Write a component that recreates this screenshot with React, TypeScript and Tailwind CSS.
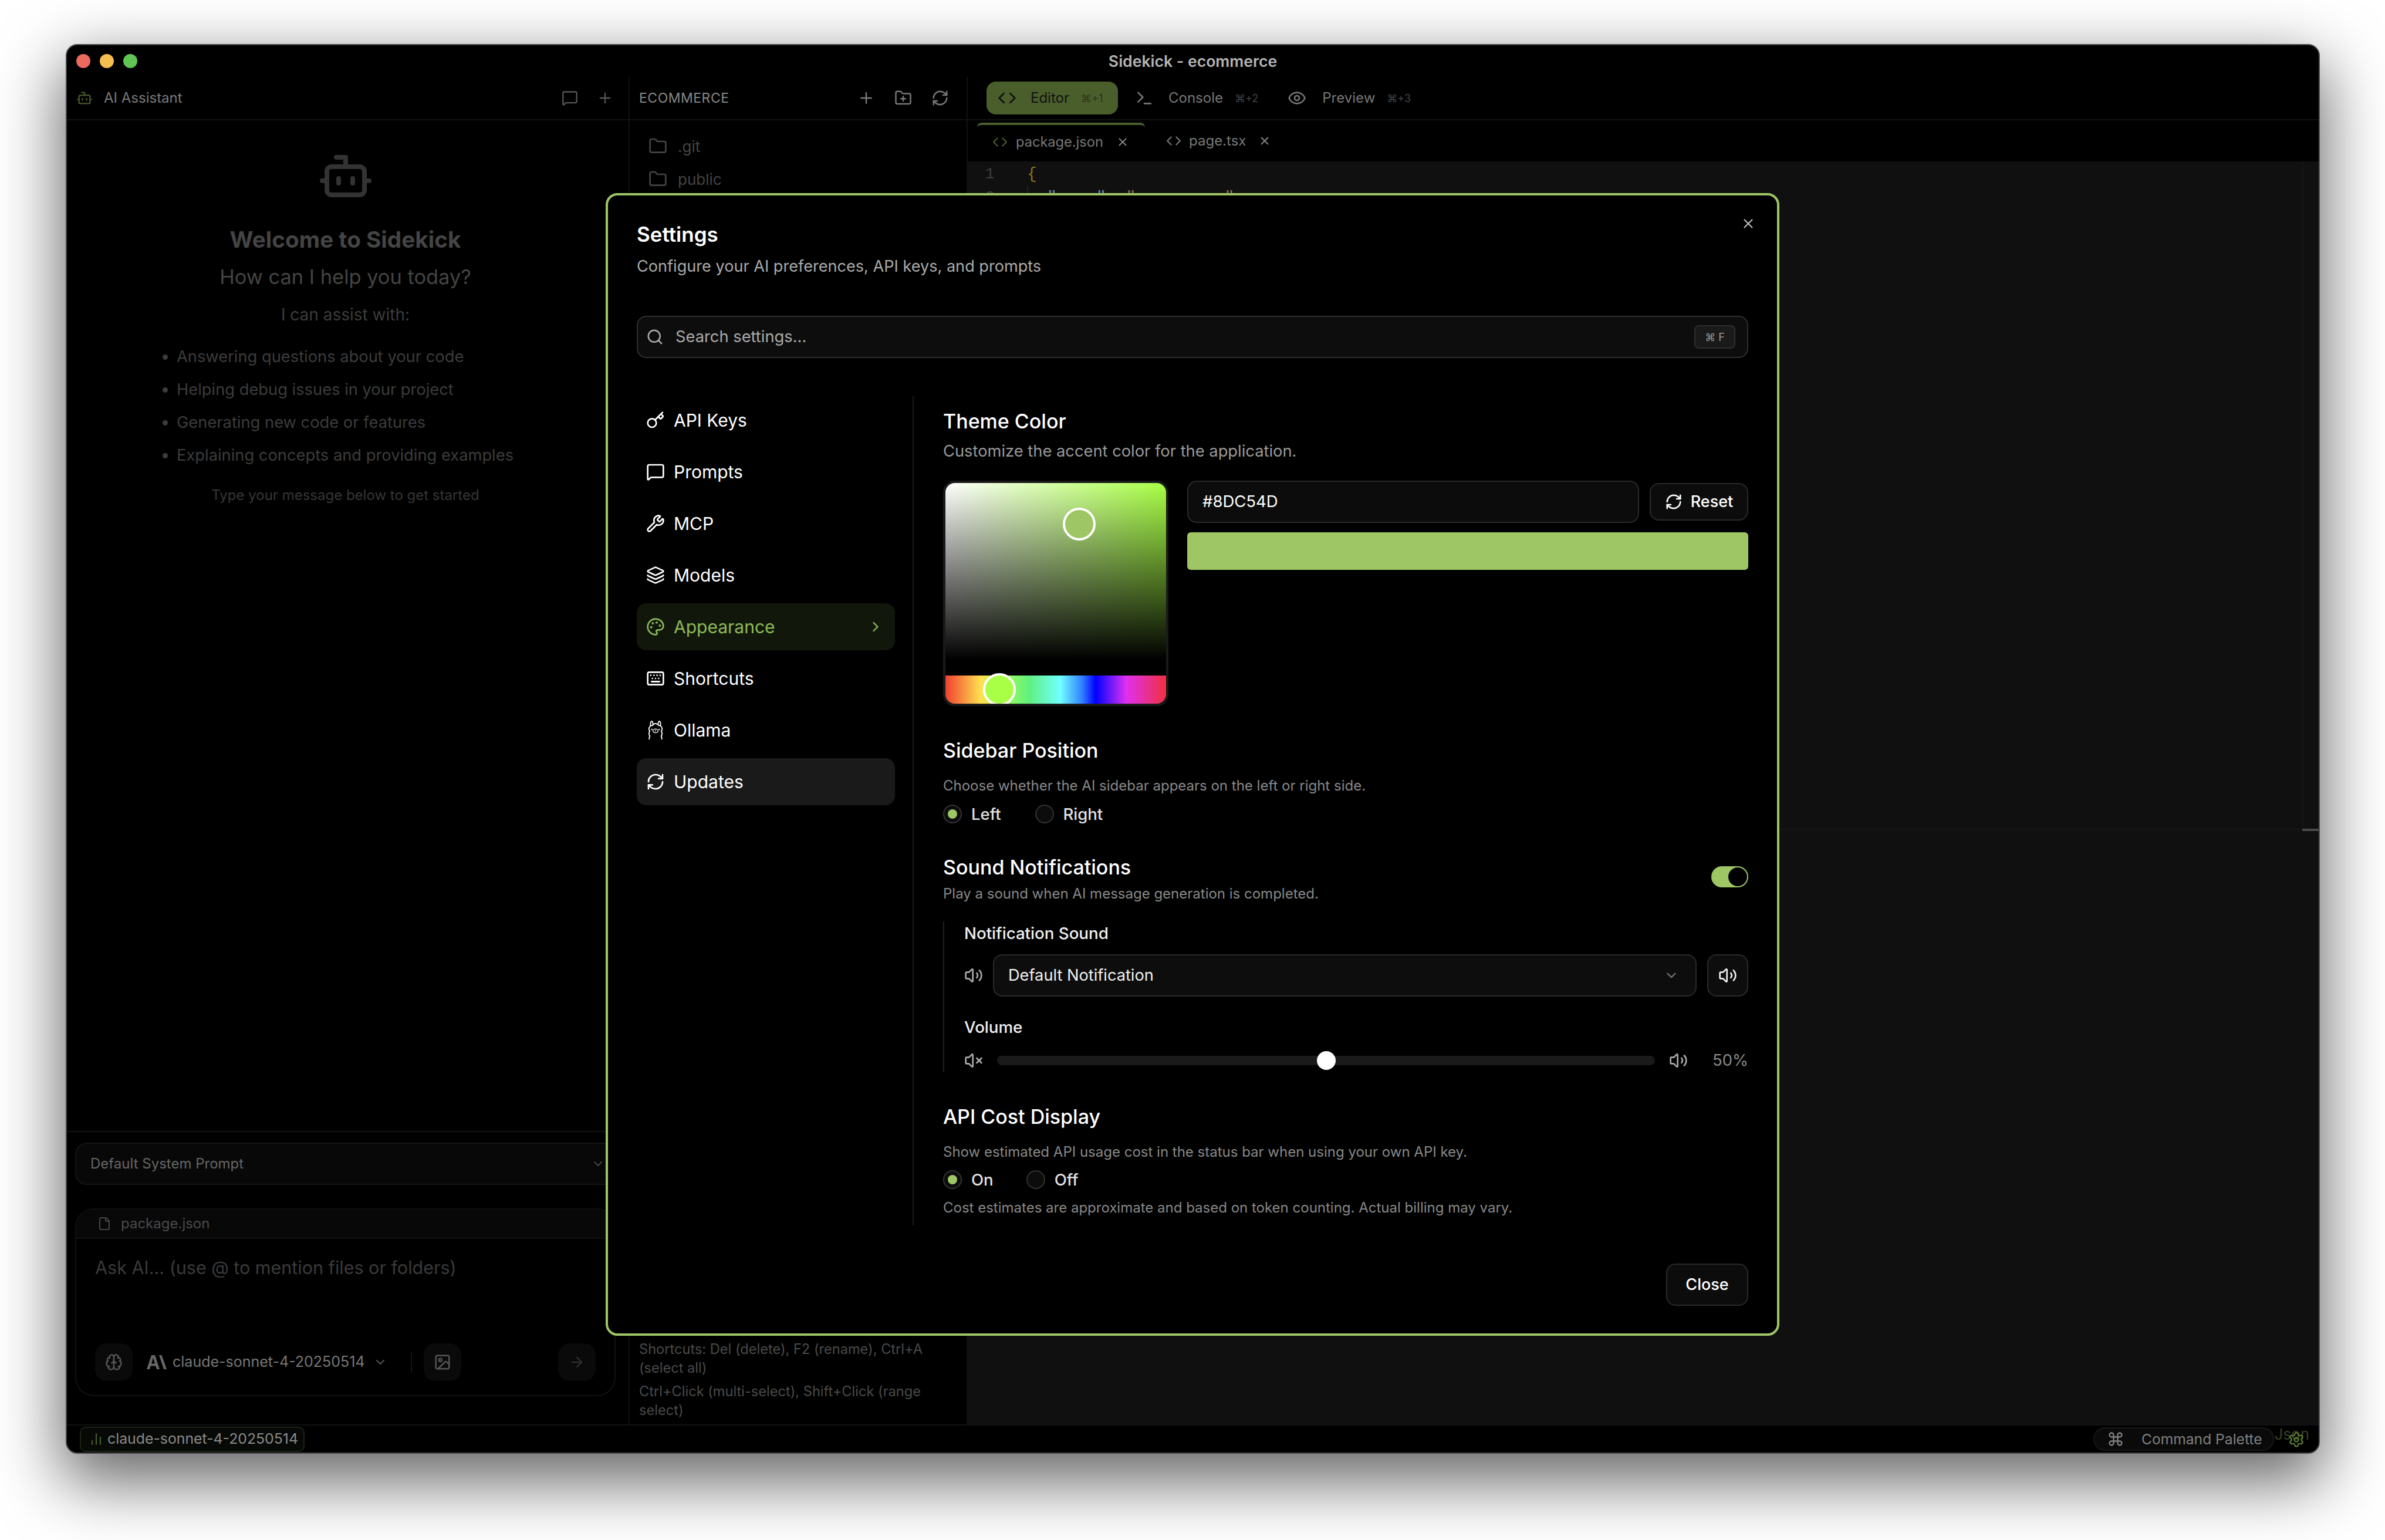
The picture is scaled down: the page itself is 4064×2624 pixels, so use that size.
import {
  ArrowRight,
  Bot,
  Brain,
  ChartNoAxesColumn,
  ChevronDown,
  ChevronRight,
  Code,
  Command,
  Eye,
  File,
  Folder,
  FolderPlus,
  Image,
  Key,
  Keyboard,
  Layers,
  MessageSquare,
  Palette,
  Plus,
  RefreshCw,
  Search,
  Settings,
  Terminal,
  Volume2,
  VolumeX,
  Wrench,
  X,
} from "lucide-react";
import { SiOllama } from "react-icons/si";

const navItems = [
  { label: "API Keys", icon: <Key size={32} /> },
  { label: "Prompts", icon: <MessageSquare size={32} /> },
  { label: "MCP", icon: <Wrench size={32} /> },
  { label: "Models", icon: <Layers size={32} /> },
  { label: "Appearance", icon: <Palette size={32} />, active: true },
  { label: "Shortcuts", icon: <Keyboard size={32} /> },
  { label: "Ollama", icon: <SiOllama size={32} /> },
  { label: "Updates", icon: <RefreshCw size={32} />, hover: true },
];

function AnthropicLogo() {
  return (
    <svg width="34" height="24" viewBox="0 0 34 24" fill="currentColor">
      <path d="M8 0h6l8 24h-5l-1.8-5.6H6.8L5 24H0zM8 14.4h6L11 4.6z" />
      <path d="M21 0h4.5L34 24h-5z" />
    </svg>
  );
}

function Radio({ label, checked }: { label: string; checked?: boolean }) {
  return (
    <div className="flex items-center gap-[16px]">
      <div className="flex h-[32px] w-[32px] items-center justify-center rounded-full border-2 border-[#333333] bg-[#0c0c0c]">
        {checked && <div className="h-[16px] w-[16px] rounded-full bg-[#9ec665]" />}
      </div>
      <span className="text-[27.5px] font-medium leading-[36px] text-[#e0e0e0]">{label}</span>
    </div>
  );
}

function Sidebar() {
  return (
    <div className="flex w-[957px] flex-col">
      <div className="flex h-[74px] items-center border-b-2 border-[#111111] pl-[16px] pr-[26px]">
        <Bot size={28} className="text-[#46592a]" />
        <span className="ml-[19px] text-[24px] leading-[32px] text-[#7a7a7a]">AI Assistant</span>
        <MessageSquare size={28} className="ml-auto text-[#555555]" />
        <Plus size={28} className="ml-[32px] text-[#555555]" />
      </div>

      <div className="flex flex-1 flex-col pr-[8px] pt-[47px]">
        <Bot size={96} className="self-center text-[#333333]" />
        <h2 className="mt-[36px] self-center text-[38.7px] font-bold leading-[48px] text-[#444444]">
          Welcome to Sidekick
        </h2>
        <p className="mt-[18px] self-center text-[34.4px] leading-[44px] text-[#444444]">
          How can I help you today?
        </p>
        <p className="mt-[22px] self-center text-[28px] leading-[40px] text-[#3c3c3c]">I can assist with:</p>
        <ul className="ml-[187px] mt-[32px] flex list-disc flex-col gap-[16px] text-[27.3px] leading-[40px] text-[#3c3c3c]">
          <li>Answering questions about your code</li>
          <li>Helping debug issues in your project</li>
          <li>Generating new code or features</li>
          <li>Explaining concepts and providing examples</li>
        </ul>
        <p className="mt-[32px] self-center text-[24px] leading-[32px] text-[#363636]">
          Type your message below to get started
        </p>
      </div>

      <div className="border-t-2 border-[#111111] pb-[48px] pl-[14px] pr-[14px] pt-[18px]">
        <div className="flex h-[72px] items-center justify-between rounded-[20px] border-2 border-[#141414] bg-[#080808] pl-[24px] pr-[24px]">
          <span className="text-[24px] text-[#666666]">Default System Prompt</span>
          <ChevronDown size={24} className="text-[#444444]" />
        </div>

        <div className="mt-[40px] mr-[8px] flex h-[320px] flex-col rounded-[32px] border-2 border-[#111111]">
          <div className="flex h-[50px] items-center rounded-t-[32px] border-b-2 border-[#111111] bg-[#080808] pl-[36px]">
            <File size={24} className="text-[#444444]" />
            <span className="ml-[16px] text-[24px] text-[#4a4a4a]">package.json</span>
          </div>
          <p className="ml-[32px] mt-[29px] text-[30.5px] leading-[40px] text-[#3a3a3a]">
            Ask AI... (use @ to mention files or folders)
          </p>
          <div className="mb-[24px] mt-auto flex items-center pl-[32px] pr-[32px]">
            <div className="flex h-[64px] w-[64px] items-center justify-center rounded-[20px] bg-[#0a0a0a]">
              <Brain size={30} className="text-[#555555]" />
            </div>
            <span className="ml-[24px] text-[#666666]">
              <AnthropicLogo />
            </span>
            <span className="ml-[10px] text-[25px] text-[#777777]">claude-sonnet-4-20250514</span>
            <ChevronDown size={24} className="ml-[14px] text-[#555555]" />
            <div className="ml-[40px] h-[36px] w-[2px] bg-[#141414]" />
            <div className="ml-[20px] flex h-[64px] w-[64px] items-center justify-center rounded-[20px] bg-[#0a0a0a]">
              <Image size={30} className="text-[#555555]" />
            </div>
            <div className="ml-auto flex h-[64px] w-[64px] items-center justify-center rounded-[20px] bg-[#0a0a0a]">
              <ArrowRight size={28} className="text-[#2e2e2e]" />
            </div>
          </div>
        </div>
      </div>
    </div>
  );
}

function FileColumn() {
  return (
    <div className="flex w-[576px] flex-col border-l-2 border-[#111111]">
      <div className="flex h-[74px] items-center border-b-2 border-[#111111] pl-[16px] pr-[30px]">
        <span className="text-[23px] tracking-[0.5px] text-[#888888]">ECOMMERCE</span>
        <Plus size={30} className="ml-auto text-[#777777]" />
        <FolderPlus size={30} className="ml-[33px] text-[#777777]" />
        <RefreshCw size={30} className="ml-[33px] text-[#777777]" />
      </div>
      <div className="flex flex-1 flex-col gap-[16px] pl-[32px] pt-[24px]">
        <div className="flex h-[40px] items-center gap-[18px]">
          <Folder size={32} className="text-[#444444]" />
          <span className="text-[26px] text-[#444444]">.git</span>
        </div>
        <div className="flex h-[40px] items-center gap-[18px]">
          <Folder size={32} className="text-[#444444]" />
          <span className="text-[26px] text-[#444444]">public</span>
        </div>
      </div>
      <div className="pb-[8px] pl-[16px] pr-[14px] text-[23.6px] leading-[32px] text-[#4a4a4a]">
        <p>Shortcuts: Del (delete), F2 (rename), Ctrl+A (select all)</p>
        <p className="mt-[8px]">Ctrl+Click (multi-select), Shift+Click (range select)</p>
      </div>
    </div>
  );
}

function EditorColumn() {
  return (
    <div className="flex flex-1 flex-col border-l-2 border-[#111111]">
      <div className="flex h-[74px] items-center border-b-2 border-[#111111] pl-[32px]">
        <div className="flex h-[56px] w-[224px] items-center rounded-[16px] bg-[#4a5e2c] pl-[19px]">
          <Code size={32} className="text-[#111111]" />
          <span className="ml-[24px] text-[24px] text-[#111111]">Editor</span>
          <span className="ml-[20px] text-[18px] text-[#2b3618]">⌘+1</span>
        </div>
        <Terminal size={32} className="ml-[29px] text-[#777777]" />
        <span className="ml-[25px] text-[24px] text-[#777777]">Console</span>
        <span className="ml-[20px] text-[18px] text-[#444444]">⌘+2</span>
        <Eye size={32} className="ml-[50px] text-[#777777]" />
        <span className="ml-[27px] text-[24px] text-[#777777]">Preview</span>
        <span className="ml-[20px] text-[18px] text-[#444444]">⌘+3</span>
      </div>
      <div className="flex h-[70px] pl-[16px]">
        <div className="mt-[4px] flex w-[286px] items-center rounded-t-[8px] border-t-[4px] border-[#4a5e2c] pb-[4px] pl-[26px]">
          <Code size={26} className="text-[#4a5e2c]" />
          <span className="ml-[14px] text-[23.6px] text-[#777777]">package.json</span>
          <X size={22} className="ml-[22px] text-[#888888]" />
        </div>
        <div className="flex items-center pl-[36px]">
          <Code size={26} className="text-[#777777]" />
          <span className="ml-[13px] text-[24px] text-[#777777]">page.tsx</span>
          <X size={22} className="ml-[21px] text-[#888888]" />
        </div>
      </div>
      <div className="flex flex-1 flex-col bg-[#101010]">
        <div className="flex flex-1">
          <div className="flex-1 pt-[2px] font-['Liberation_Mono',monospace] text-[28px] leading-[40px]">
            <div className="flex">
              <span className="w-[46px] text-right text-[#3c3c3c]">1</span>
              <span className="ml-[55px] text-[#8a7420]">{"{"}</span>
            </div>
            <div className="flex">
              <span className="w-[46px] text-right text-[#3c3c3c]">2</span>
              <span className="ml-[55px] border-l-2 border-[#222222] pl-[32px] text-[#5f86a8]">
                "name": <span className="text-[#8a6a4a]">"ecommerce",</span>
              </span>
            </div>
          </div>
          <div className="w-[28px] border-l-2 border-[#161616]" />
        </div>
        <div className="relative border-t-2 border-[#181818]">
          <div className="absolute right-0 top-[-2px] h-[4px] w-[28px] bg-[#4a4a4a]" />
          <div className="h-[1013px]" />
        </div>
      </div>
    </div>
  );
}

function SoundPanel() {
  return (
    <div className="mt-[31px] border-l-2 border-[#222222] pl-[34px]">
      <p className="text-[27.7px] font-medium leading-[40px] text-[#f0f0f0]">Notification Sound</p>
      <div className="mt-[16px] flex items-center">
        <Volume2 size={32} className="text-[#aaaaaa]" />
        <div className="ml-[17px] flex h-[72px] flex-1 items-center justify-between rounded-[16px] border-2 border-[#2a2a2a] bg-[#0d0d0d] pl-[24px] pr-[28px]">
          <span className="text-[27.2px] text-[#f0f0f0]">Default Notification</span>
          <ChevronDown size={26} className="text-[#777777]" />
        </div>
        <div className="ml-[18px] flex h-[72px] w-[70px] items-center justify-center rounded-[16px] border-2 border-[#2a2a2a] bg-[#0d0d0d]">
          <Volume2 size={32} className="text-[#eeeeee]" />
        </div>
      </div>
      <p className="mt-[32px] text-[27.7px] font-medium leading-[40px] text-[#f0f0f0]">Volume</p>
      <div className="mt-[17px] flex h-[40px] items-center">
        <VolumeX size={32} className="text-[#aaaaaa]" />
        <div className="relative ml-[24px] h-[16px] w-[1121px] rounded-full bg-[#1a1a1a]">
          <div className="absolute left-[545px] top-[-8px] h-[32px] w-[32px] rounded-full bg-white" />
        </div>
        <Volume2 size={32} className="ml-[24px] text-[#aaaaaa]" />
        <span className="ml-auto text-[27.5px] text-[#888888]">50%</span>
      </div>
    </div>
  );
}

function SettingsModal() {
  return (
    <div className="absolute left-[918px] top-[252px] flex h-[1947px] w-[2000px] flex-col rounded-[20px] border-4 border-[#9ec665] bg-black px-[49px]">
      <X size={26} className="absolute right-[36px] top-[35px] text-[#bbbbbb]" />
      <h2 className="mt-[42px] text-[35px] font-semibold leading-[48px] text-white">Settings</h2>
      <p className="mt-[11px] text-[27.1px] leading-[40px] text-[#aaaaaa]">Configure your AI preferences, API keys, and prompts</p>

      <div className="mt-[64px] flex h-[72px] items-center rounded-[16px] border-2 border-[#2e2e2e] bg-[#0d0d0d] pl-[14px] pr-[20px]">
        <Search size={30} className="text-[#aaaaaa]" />
        <span className="ml-[20px] text-[27.3px] text-[#aaaaaa]">Search settings...</span>
        <span className="ml-auto flex h-[40px] w-[70px] items-center justify-center rounded-[8px] border-2 border-[#2e2e2e] bg-[#1a1a1a] text-[18px] text-[#999999]">
          ⌘ F
        </span>
      </div>

      <div className="mt-[65px] flex">
        <div className="flex h-[1413px] w-[472px] flex-col gap-[8px] border-r-2 border-[#1a1a1a] pr-[30px] pt-[1px]">
          {navItems.map((item) => (
            <div
              key={item.label}
              className={
                item.active
                  ? "flex h-[80px] items-center rounded-[16px] bg-[#12170c] pl-[16px] pr-[19px] text-[#8dbb57]"
                  : item.hover
                    ? "flex h-[80px] items-center rounded-[16px] bg-[#1a1a1a] pl-[16px] pr-[19px] text-white"
                    : "flex h-[80px] items-center rounded-[16px] pl-[16px] pr-[19px] text-white"
              }
            >
              {item.icon}
              <span className="ml-[15px] text-[30px]">{item.label}</span>
              {item.active && <ChevronRight size={28} className="ml-auto" />}
            </div>
          ))}
        </div>

        <div className="ml-[50px] flex-1">
          <h3 className="mt-[21px] text-[34px] font-medium leading-[44px] text-white">Theme Color</h3>
          <p className="mt-[9px] text-[27.3px] leading-[40px] text-[#999999]">Customize the accent color for the application.</p>

          <div className="mt-[30px] flex">
            <div className="h-[384px] w-[384px] rounded-[20px] border-4 border-[#1a1a1a] bg-black">
              <div className="relative h-full w-full overflow-hidden rounded-[16px]">
                <div className="h-[328px] bg-[linear-gradient(to_top,#000_8%,transparent),linear-gradient(to_right,#fff,#a8ff45)]" />
                <div className="h-[48px] bg-[linear-gradient(to_right,#ef4030,#ffe050_16%,#a8ff50_25%,#60f080_38%,#70ffff_52%,#3080ff_62%,#0000ff_68%,#e030f0_82%,#f03040)]" />
                <div className="absolute left-[200px] top-[42px] h-[56px] w-[56px] rounded-full border-4 border-white bg-[#9ec665]" />
                <div className="absolute left-[64px] top-[324px] h-[56px] w-[56px] rounded-full border-4 border-white bg-[#a8ff45]" />
              </div>
            </div>
            <div className="ml-[32px] flex flex-1 flex-col gap-[16px]">
              <div className="flex items-start">
                <div className="flex h-[72px] flex-1 items-center rounded-[16px] border-2 border-[#2a2a2a] bg-[#0c0c0c] pl-[24px] text-[27.5px] text-white">
                  #8DC54D
                </div>
                <div className="ml-[18px] mt-[4px] flex h-[64px] w-[168px] items-center justify-center gap-[14px] rounded-[16px] border-2 border-[#2a2a2a] bg-[#0c0c0c] text-[27px] font-medium text-white">
                  <RefreshCw size={30} />
                  Reset
                </div>
              </div>
              <div className="h-[64px] rounded-[6px] bg-[#9ec665]" />
            </div>
          </div>

          <h3 className="mt-[54px] text-[34px] font-medium leading-[44px] text-white">Sidebar Position</h3>
          <p className="mt-[22px] text-[24px] leading-[32px] text-[#888888]">Choose whether the AI sidebar appears on the left or right side.</p>
          <div className="mt-[14px] flex gap-[58px]">
            <Radio label="Left" checked />
            <Radio label="Right" />
          </div>

          <div className="mt-[51px] flex items-start justify-between">
            <div>
              <h3 className="text-[34px] font-medium leading-[44px] text-white">Sound Notifications</h3>
              <p className="mt-[7px] text-[24px] leading-[32px] text-[#888888]">Play a sound when AI message generation is completed.</p>
            </div>
            <div className="mt-[20px] flex h-[36px] w-[63px] items-center justify-end rounded-full bg-[#9ec665] pr-[2px]">
              <div className="h-[32px] w-[32px] rounded-full bg-black" />
            </div>
          </div>

          <SoundPanel />

          <h3 className="mt-[54px] text-[34px] font-medium leading-[44px] text-white">API Cost Display</h3>
          <p className="mt-[22px] text-[24px] leading-[32px] text-[#888888]">Show estimated API usage cost in the status bar when using your own API key.</p>
          <div className="mt-[13px] flex gap-[56px]">
            <Radio label="On" checked />
            <Radio label="Off" />
          </div>
          <p className="mt-[14px] text-[24px] leading-[32px] text-[#888888]">Cost estimates are approximate and based on token counting. Actual billing may vary.</p>
        </div>
      </div>

      <div className="absolute bottom-[47px] right-[49px] flex h-[72px] w-[140px] items-center justify-center rounded-[16px] border-2 border-[#2a2a2a] bg-[#0c0c0c] text-[27px] font-medium text-white">
        Close
      </div>
    </div>
  );
}

export default function App() {
  return (
    <div className="h-[2624px] w-[4064px] bg-white pl-[112px] pt-[75px] font-['Inter',sans-serif]">
      <div className="relative flex h-[2402px] w-[3841px] flex-col overflow-hidden rounded-[20px] border-2 border-[#4a4a4a] bg-black shadow-[0_40px_110px_8px_rgba(0,0,0,0.6)]">
        <div className="flex h-[54px] items-center pl-[16px]">
          <div className="flex gap-[16px]">
            <span className="h-[24px] w-[24px] rounded-full bg-[#ec6a5e]" />
            <span className="h-[24px] w-[24px] rounded-full bg-[#f4bf4f]" />
            <span className="h-[24px] w-[24px] rounded-full bg-[#61c554]" />
          </div>
          <span className="absolute left-0 right-0 top-[8px] text-center text-[26.6px] font-semibold text-[#b4b4b4]">
            Sidekick - ecommerce
          </span>
        </div>

        <div className="flex flex-1 overflow-hidden">
          <Sidebar />
          <FileColumn />
          <EditorColumn />
        </div>

        <div className="flex h-[48px] items-center border-t-2 border-[#111111] pl-[22px] pr-[76px]">
          <div className="flex h-[43px] w-[383px] items-center rounded-[10px] border-2 border-[#1a2414] bg-[#070907] pl-[14px]">
            <ChartNoAxesColumn size={24} className="text-[#4a5e2c]" />
            <span className="ml-[7px] text-[24.8px] text-[#8a8a8a]">claude-sonnet-4-20250514</span>
          </div>
          <div className="ml-auto flex h-[40px] w-[308px] items-center rounded-[20px] border-2 border-[#181818] bg-[#0a0a0a] pl-[22px]">
            <Command size={28} className="text-[#808080]" />
            <span className="ml-[30px] text-[24.6px] text-[#808080]">Command Palette</span>
          </div>
        </div>

        <span className="absolute bottom-[16px] right-[16px] text-[26px] leading-[30px] text-[#33401f]">Json</span>
        <Settings size={28} className="absolute bottom-[8px] right-[24px] text-[#5a7a32]" />

        <SettingsModal />
      </div>
    </div>
  );
}
